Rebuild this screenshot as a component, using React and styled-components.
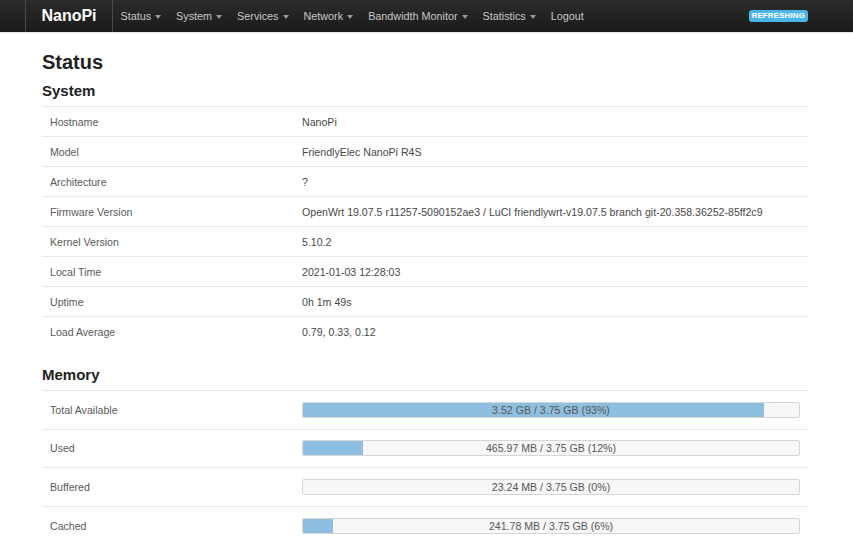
import React from 'react'
import styled, { createGlobalStyle } from 'styled-components'

const Global = createGlobalStyle`
  html, body { margin: 0; padding: 0; background: #fff; }
  body {
    font-family: "Liberation Sans", Arial, sans-serif;
    font-size: 10.6px;
    color: #404040;
  }
`;

const Navbar = styled.div`
  height: 33px;
  background: linear-gradient(#2c2c2c, #1a1a1a);
  border-bottom: 1px solid #e6e6e6;
  display: flex;
  align-items: stretch;
  padding-left: 25px;
  padding-right: 45px;
  box-sizing: border-box;
`;

const Brand = styled.div`
  width: 88px;
  border-left: 1px solid #4a4a4a;
  border-right: 1px solid #4a4a4a;
  display: flex;
  align-items: center;
  justify-content: center;
  box-sizing: border-box;
  color: #fff;
  font-size: 16px;
  font-weight: bold;
`;

const Menu = styled.ul`
  display: flex;
  list-style: none;
  margin: 0;
  padding: 0;
  flex: 1;
`;

const MenuItem = styled.li`
  display: flex;
  align-items: center;
  padding: 0 7.5px;
  color: #c8c8c8;
  font-size: 10.8px;
  white-space: nowrap;
`;

const Caret = styled.span`
  display: inline-block;
  margin-left: 4px;
  width: 0;
  height: 0;
  border-left: 3.5px solid transparent;
  border-right: 3.5px solid transparent;
  border-top: 4px solid #9a9a9a;
  margin-top: 1px;
`;

const Indicators = styled.div`
  display: flex;
  align-items: center;
`;

const Badge = styled.span`
  background: #4cb5e8;
  color: #fff;
  font-size: 8px;
  font-weight: bold;
  padding: 1px 3px;
  border-radius: 3px;
  line-height: 10px;
  letter-spacing: 0.1px;
`;

const Container = styled.div`
  margin: 0 45px 0 42px;
  padding-top: 18px;
`;

const H2 = styled.h2`
  font-size: 20px;
  font-weight: bold;
  color: #222;
  margin: 0 0 9px;
  line-height: 22px;
`;

const H3 = styled.h3`
  font-size: 15px;
  font-weight: bold;
  color: #222;
  margin: ${({ $top }) => $top || 0}px 0 7px;
  line-height: 17px;
`;

const Table = styled.div`
  display: flex;
  flex-direction: column;
`;

const Row = styled.div`
  display: flex;
  align-items: center;
  height: ${({ $h }) => $h}px;
  border-top: 1px solid #e8e8e8;
  box-sizing: border-box;
`;

const Label = styled.div`
  width: 260px;
  padding-left: 8px;
  box-sizing: border-box;
  color: #595959;
`;

const Value = styled.div`
  flex: 1;
  padding-right: 8px;
  color: #484848;
`;

const Bar = styled.div`
  position: relative;
  height: 16px;
  border: 1px solid #d6d6d6;
  background: #f7f7f7;
  border-radius: 2px;
  box-sizing: border-box;
  overflow: hidden;
`;

const Fill = styled.div`
  position: absolute;
  left: 0;
  top: 0;
  bottom: 0;
  background: #8fbfe0;
`;

const BarText = styled.div`
  position: relative;
  text-align: center;
  line-height: 14px;
  color: #555;
`;

const menu = ['Status', 'System', 'Services', 'Network', 'Bandwidth Monitor', 'Statistics']

const system = [
  ['Hostname', 'NanoPi'],
  ['Model', 'FriendlyElec NanoPi R4S'],
  ['Architecture', '?'],
  ['Firmware Version', 'OpenWrt 19.07.5 r11257-5090152ae3 / LuCI friendlywrt-v19.07.5 branch git-20.358.36252-85ff2c9'],
  ['Kernel Version', '5.10.2'],
  ['Local Time', '2021-01-03 12:28:03'],
  ['Uptime', '0h 1m 49s'],
  ['Load Average', '0.79, 0.33, 0.12'],
]

const memory = [
  ['Total Available', 93, '3.52 GB / 3.75 GB (93%)'],
  ['Used', 12, '465.97 MB / 3.75 GB (12%)'],
  ['Buffered', 0, '23.24 MB / 3.75 GB (0%)'],
  ['Cached', 6, '241.78 MB / 3.75 GB (6%)'],
]

export default function App() {
  return (
    <>
      <Global />
      <Navbar>
        <Brand>NanoPi</Brand>
        <Menu>
          {menu.map((m) => (
            <MenuItem key={m}>{m}<Caret /></MenuItem>
          ))}
          <MenuItem>Logout</MenuItem>
        </Menu>
        <Indicators>
          <Badge>REFRESHING</Badge>
        </Indicators>
      </Navbar>
      <Container>
        <H2>Status</H2>
        <H3>System</H3>
        <Table>
          {system.map(([k, v]) => (
            <Row key={k} $h={30}>
              <Label>{k}</Label>
              <Value>{v}</Value>
            </Row>
          ))}
        </Table>
        <H3 $top={20}>Memory</H3>
        <Table>
          {memory.map(([k, pct, txt]) => (
            <Row key={k} $h={38.6}>
              <Label>{k}</Label>
              <Value>
                <Bar>
                  <Fill style={{ width: pct + '%' }} />
                  <BarText>{txt}</BarText>
                </Bar>
              </Value>
            </Row>
          ))}
        </Table>
      </Container>
    </>
  )
}
